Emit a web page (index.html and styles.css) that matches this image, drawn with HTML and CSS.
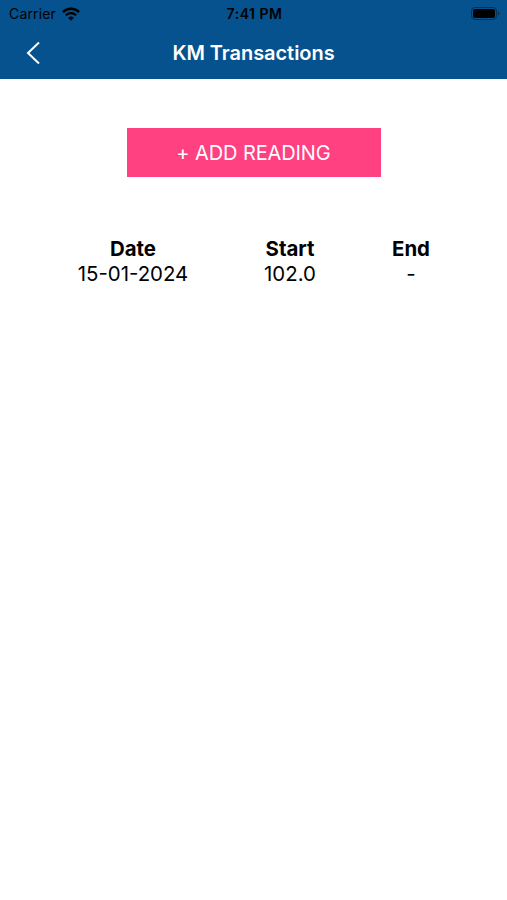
FILE: index.html
```html
<!DOCTYPE html>
<html lang="en">
  <head>
    <meta charset="UTF-8" />
    <meta name="viewport" content="width=device-width, initial-scale=1.0" />
    <title>KM Transactions</title>
    <link rel="stylesheet" href="styles.css">
  </head>
  <body>
    <header class="header">
      <div class="status">
        <div class="carrier">
          <span>Carrier</span>
          <svg class="wifi" width="18" height="14" viewBox="0 0 18 14">
            <path d="M.9 5.1a11.5 11.5 0 0 1 16.2 0M3.9 8.2a7.2 7.2 0 0 1 10.2 0" fill="none" stroke="#000" stroke-width="2.3" />
            <path d="M9 13.8 6.2 10.9a4 4 0 0 1 5.6 0z" />
          </svg>
        </div>
        <span class="time">7:41 PM</span>
        <svg class="battery" width="29" height="13" viewBox="0 0 29 13">
          <rect x="0.5" y="0.5" width="25" height="12" rx="3.5" fill="none" stroke="#000" stroke-opacity="0.4" />
          <rect x="2" y="2" width="22" height="9" rx="2" />
          <path d="M27 4.5q1.5.7 1.5 2t-1.5 2z" fill-opacity="0.4" />
        </svg>
      </div>
      <nav class="navbar">
        <button class="back" type="button" aria-label="Back">
          <svg width="14" height="24" viewBox="0 0 14 24">
            <path d="M13 1.5 2 12l11 10.5" fill="none" stroke="#fff" stroke-width="2" />
          </svg>
        </button>
        <h1 class="title">KM Transactions</h1>
      </nav>
    </header>
    <main class="content">
      <button class="add-btn" type="button">+ ADD READING</button>
      <table class="readings">
        <tr>
          <th class="date">Date</th>
          <th class="start">Start</th>
          <th class="end">End</th>
        </tr>
        <tr>
          <td>15-01-2024</td>
          <td>102.0</td>
          <td>-</td>
        </tr>
      </table>
    </main>
  </body>
</html>
```
FILE: styles.css
```css
body {
  margin: 0;
  background: #fff;
  color: #000;
  font-family: Inter, "Liberation Sans", sans-serif;
}
.header {
  height: 79px;
  background: #05528f;
}
.status {
  display: grid;
  grid-template-columns: 1fr auto 1fr;
  align-items: center;
  height: 27px;
  padding: 0 7px 0 9px;
  font-size: 14px;
}
.carrier {
  display: flex;
  align-items: center;
  gap: 6px;
  letter-spacing: 0.15px;
}
.time {
  font-weight: 600;
  font-size: 14px;
  letter-spacing: 0.5px;
}
.battery {
  justify-self: end;
}
.navbar {
  display: grid;
  grid-template-columns: 60px 1fr 60px;
  align-items: center;
  height: 52px;
}
.back {
  display: flex;
  padding: 0 0 0 26px;
  border: none;
  background: none;
}
.title {
  margin: 0;
  color: #fff;
  font-size: 20px;
  font-weight: 600;
  letter-spacing: -0.05px;
  text-align: center;
}
.content {
  display: flex;
  flex-direction: column;
  align-items: center;
  padding-top: 49px;
}
.add-btn {
  width: 254px;
  height: 49px;
  border: none;
  background: #ff4081;
  color: #fff;
  font-family: inherit;
  font-size: 20px;
  letter-spacing: -0.1px;
}
.readings {
  margin: 59px 0 0 1px;
  border-collapse: collapse;
  font-size: 20.4px;
  line-height: 25px;
  text-align: center;
}
.readings th,
.readings td {
  padding: 0;
}
.date {
  width: 174px;
}
.start {
  width: 140px;
}
.end {
  width: 102px;
}
```
